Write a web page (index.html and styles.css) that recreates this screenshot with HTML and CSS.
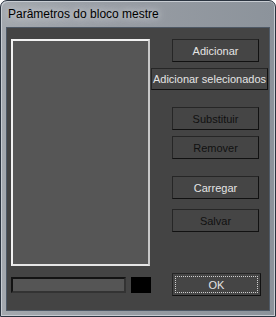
FILE: index.html
```html
<!DOCTYPE html>
<html lang="pt">
<head>
    <meta charset="utf-8"/>
    <title>Parâmetros do bloco mestre</title>
    <link rel="stylesheet" href="styles.css">
</head>
<body>
    <div class="window">
        <div class="titlebar">Parâmetros do bloco mestre</div>
        <div class="client">
            <div class="main">
                <div class="listbox"></div>
                <div class="actions">
                    <button class="btn">Adicionar</button>
                    <button class="btn wide">Adicionar selecionados</button>
                    <button class="btn disabled gap-lg">Substituir</button>
                    <button class="btn disabled">Remover</button>
                    <button class="btn gap-lg">Carregar</button>
                    <button class="btn disabled gap-md">Salvar</button>
                </div>
            </div>
            <div class="footer">
                <div class="progress"></div>
                <div class="swatch"></div>
                <button class="btn ok"><span>OK</span></button>
            </div>
        </div>
    </div>
</body>
</html>
```

FILE: styles.css
```css
*{
    margin: 0;
    padding: 0;
    box-sizing: border-box;
}
body{
    width: 276px;
    height: 317px;
    background: #ffffff;
    font-family: "Liberation Sans", Arial, sans-serif;
    font-size: 11px;
}
.window{
    width: 276px;
    height: 317px;
    border: 1px solid #2b3440;
    border-radius: 7px 7px 0 0;
    background: linear-gradient(to right, #a3a8ae 0%, #989da4 40%, #8c939b 100%);
    box-shadow: inset 1px 1px 0 #c7ccd2, inset -1px -1px 0 #c7ccd2;
    padding: 0 5px 5px 5px;
    display: flex;
    flex-direction: column;
}
.titlebar{
    height: 26px;
    padding: 6px 0 0 2px;
    font-family: "Liberation Sans", Arial, sans-serif;
    font-size: 12px;
    line-height: 15px;
    color: #000;
    text-shadow: 0 0 6px #cdd1d6, 0 0 10px #cdd1d6;
}
.client{
    flex: 1;
    background: #444444;
    border: 1px solid #4e5966;
    display: flex;
    flex-direction: column;
    padding: 11px 0 0 4px;
}
.main{
    display: flex;
    height: 227px;
}
.listbox{
    width: 139px;
    height: 227px;
    background: #565656;
    border: 2px solid #f2f2f2;
    border-right-color: #c8c8c8;
    border-bottom-color: #e6e6e6;
}
.actions{
    display: flex;
    flex-direction: column;
    align-items: flex-start;
    padding-left: 1px;
}
.btn{
    width: 87px;
    height: 23px;
    margin-left: 21px;
    background: #454545;
    border: 1px solid #262626;
    border-right-color: #111;
    border-bottom-color: #111;
    color: #e4e4e4;
    font-family: "Liberation Sans", Arial, sans-serif;
    font-size: 11px;
}
.btn + .btn{
    margin-top: 6px;
}
.btn.wide{
    width: 117px;
    height: 22px;
    margin-left: 0;
    white-space: nowrap;
}
.btn.disabled{
    color: #111;
}
.btn.gap-lg{
    margin-top: 17px;
}
.btn.gap-md{
    margin-top: 10px;
}
.footer{
    display: flex;
    align-items: center;
    margin-top: 7px;
    height: 23px;
}
.progress{
    width: 115px;
    height: 16px;
    background: #555;
    border: 2px solid #131313;
    border-right-color: #333;
    border-bottom-color: #333;
}
.swatch{
    width: 20px;
    height: 16px;
    margin-left: 5px;
    background: #000;
}
.btn.ok{
    width: 89px;
    height: 23px;
    margin-left: 21px;
    padding: 2px;
}
.btn.ok span{
    display: block;
    height: 100%;
    border: 1px dotted #d0d0d0;
    line-height: 16px;
}
```
